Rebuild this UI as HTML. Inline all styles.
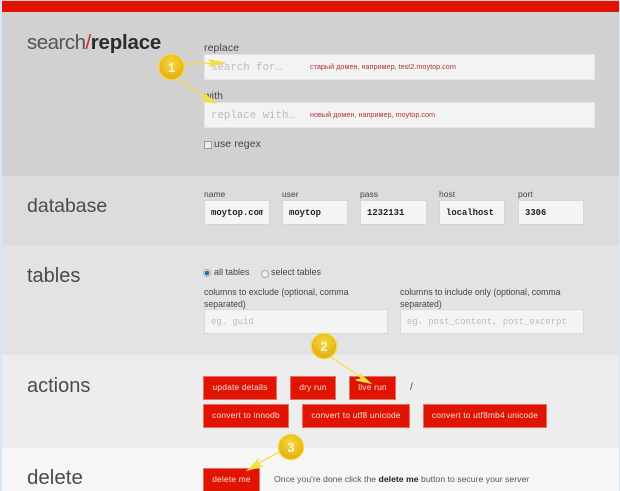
<!DOCTYPE html>
<html><head><meta charset="utf-8">
<style>
html,body{margin:0;padding:0;width:620px;height:491px;overflow:hidden;background:#d8e6f6}
#w{position:absolute;left:0;top:0;width:620px;height:491px;overflow:hidden;filter:blur(.35px);font-family:"Liberation Sans",sans-serif}
.s{position:absolute;left:2px;width:617px}
.t{position:absolute;white-space:nowrap;line-height:14px}
.h{position:absolute;left:27px;white-space:nowrap;font-family:"Liberation Sans",sans-serif;font-size:21px;line-height:28px;color:#4a4a4a}
.l{font-size:8.75px;color:#444}
.i{position:absolute;box-sizing:border-box;background:#f3f3f3;border:1px solid #e0e0e0;font-family:"Liberation Mono","DejaVu Sans Mono",monospace;white-space:nowrap;overflow:hidden}
.db{top:200px;height:25px;font-size:8.9px;font-weight:bold;color:#222;padding:5px 0 0 6px;line-height:14px;background:#f5f5f5;border:1px solid #d5d5d5}
.ph{color:#bbb}
.b{position:absolute;box-sizing:border-box;background:#e01400;border:1px solid #e2706a;color:#f6e0dc;font-size:8.4px;letter-spacing:.2px;text-align:center;height:24px;line-height:21px;white-space:nowrap}
</style></head><body>
<div id="w">
<div class="s" style="top:0;height:13px;background:#d0d0d0"></div>
<div class="s" style="top:1px;height:11px;background:#e01400"></div>
<div class="s" style="top:13px;height:163px;background:#d1d1d1"></div>
<div class="s" style="top:176px;height:69px;background:#dcdcdc"></div>
<div class="s" style="top:245px;height:110px;background:#e3e3e3"></div>
<div class="s" style="top:355px;height:93px;background:#ededed"></div>
<div class="s" style="top:448px;height:43px;background:#f6f6f6"></div>

<div class="h" style="top:29px;font-size:20.5px;letter-spacing:-.5px"><span style="color:#555">search</span><span style="color:#d8261c">/</span><span style="color:#2c2c2c;font-weight:bold;letter-spacing:-.2px">replace</span></div>
<div class="h" style="top:192px;font-size:19.5px">database</div>
<div class="h" style="top:262px;font-size:20px">tables</div>
<div class="h" style="top:372px;font-size:20px">actions</div>
<div class="h" style="top:464px;font-size:20.5px">delete</div>

<div class="t l" style="left:204px;top:41px;font-size:10.5px;letter-spacing:.1px">replace</div>
<div class="i" style="left:204px;top:54px;width:391px;height:26px;border-color:#e4e4e4;padding:6px 0 0 6px;line-height:14px;color:#bbb;font-size:10.75px">search for…</div>
<div class="t" style="left:310px;top:60px;font-size:7.25px;color:#b5333a">старый домен, например, test2.moytop.com</div>
<div class="t l" style="left:204px;top:89px;font-size:10.5px;letter-spacing:.1px">with</div>
<div class="i" style="left:204px;top:102px;width:391px;height:26px;border-color:#e4e4e4;padding:6px 0 0 6px;line-height:14px;color:#bbb;font-size:10.75px">replace with…</div>
<div class="t" style="left:310px;top:108px;font-size:7.25px;color:#b5333a">новый домен, например, moytop.com</div>
<div style="position:absolute;left:204px;top:141px;width:6px;height:6px;border:1px solid #999;background:#eee"></div>
<div class="t l" style="left:214px;top:137px;font-size:10.5px;letter-spacing:.1px">use regex</div>

<div class="t l" style="left:204px;top:187px;font-size:8.5px">name</div>
<div class="t l" style="left:282px;top:187px;font-size:8.5px">user</div>
<div class="t l" style="left:360px;top:187px;font-size:8.5px">pass</div>
<div class="t l" style="left:439px;top:187px;font-size:8.5px">host</div>
<div class="t l" style="left:518px;top:187px;font-size:8.5px">port</div>
<div class="i db" style="left:204px;width:66px"><span style="display:inline-block;width:52px;overflow:hidden">moytop.com</span></div>
<div class="i db" style="left:282px;width:66px">moytop</div>
<div class="i db" style="left:360px;width:67px">1232131</div>
<div class="i db" style="left:439px;width:66px">localhost</div>
<div class="i db" style="left:518px;width:66px">3306</div>

<div style="position:absolute;left:203px;top:269px;width:6px;height:6px;border:1px solid #aaa;border-radius:50%;background:radial-gradient(circle,#1f6fa8 0 2px,#eee 2.5px)"></div>
<div class="t l" style="left:214px;top:265px;font-size:9px">all tables</div>
<div style="position:absolute;left:261px;top:270px;width:6px;height:6px;border:1px solid #aaa;border-radius:50%;background:#eee"></div>
<div class="t l" style="left:271px;top:265px;font-size:9px">select tables</div>
<div class="t l" style="left:204px;top:286px;line-height:12px">columns to exclude (optional, comma<br>separated)</div>
<div class="t l" style="left:400px;top:286px;line-height:12px">columns to include only (optional, comma<br>separated)</div>
<div class="i ph" style="left:204px;top:309px;width:184px;height:25px;padding:5px 0 0 6px;line-height:14px;font-size:8.9px;background:#f4f4f4;border-color:#d8d8d8">eg. guid</div>
<div class="i ph" style="left:400px;top:309px;width:184px;height:25px;padding:5px 0 0 6px;line-height:14px;font-size:8.9px;background:#f4f4f4;border-color:#d8d8d8">eg. post_content, post_excerpt</div>

<div class="b" style="left:203px;top:376px;width:74px">update details</div>
<div class="b" style="left:290px;top:376px;width:46px">dry run</div>
<div class="b" style="left:349px;top:376px;width:47px">live run</div>
<div class="t l" style="left:410px;top:381px;font-size:10px">/</div>
<div class="b" style="left:203px;top:404px;width:86px">convert to innodb</div>
<div class="b" style="left:302px;top:404px;width:108px">convert to utf8 unicode</div>
<div class="b" style="left:423px;top:404px;width:124px">convert to utf8mb4 unicode</div>
<div class="b" style="left:203px;top:468px;width:57px;height:26px">delete me</div>
<div class="t" style="left:274px;top:472px;font-size:8.7px;color:#555">Once you're done click the <b style="color:#222">delete me</b> button to secure your server</div>

<svg width="620" height="491" style="position:absolute;left:0;top:0">
<defs><radialGradient id="g" cx="50%" cy="35%" r="70%"><stop offset="0" stop-color="#f6d93a"/><stop offset="1" stop-color="#e0a810"/></radialGradient></defs>
<g stroke="#f4e03c" stroke-width="1.3" fill="#f4e03c">
<line x1="184" y1="64" x2="220" y2="63"/><path d="M225 63 L209 60 L213 63 L209 66Z"/>
<line x1="178" y1="80" x2="211" y2="100"/><path d="M215 103 L205 94 L206 99 L201 100Z"/>
<line x1="331" y1="357" x2="365" y2="380"/><path d="M370 383 L360 374 L361 379 L356 380Z"/>
<line x1="279" y1="452" x2="252" y2="467"/><path d="M248 470 L262 466 L257 464 L258 460Z"/>
</g>
<g font-family="Liberation Sans,sans-serif" font-size="13" font-weight="bold" fill="#fff5d0" text-anchor="middle">
<circle cx="171.5" cy="67" r="12.7" fill="url(#g)" stroke="#f5dc3c" stroke-width="1.2"/><text x="171.5" y="72">1</text>
<circle cx="324" cy="346" r="12.7" fill="url(#g)" stroke="#f5dc3c" stroke-width="1.2"/><text x="324" y="351">2</text>
<circle cx="291" cy="447" r="12.7" fill="url(#g)" stroke="#f5dc3c" stroke-width="1.2"/><text x="291" y="452">3</text>
</g>
</svg>
</div>
</body></html>
